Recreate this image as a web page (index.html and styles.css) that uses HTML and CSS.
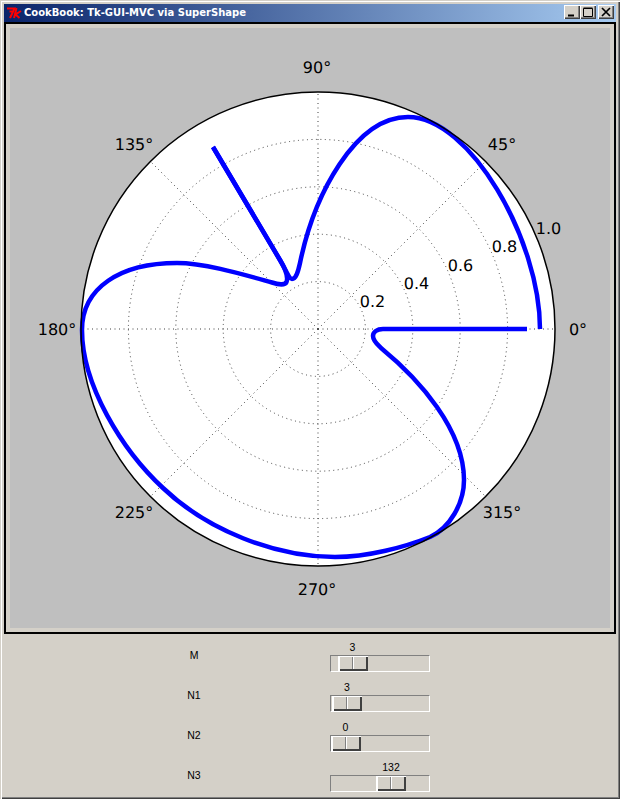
FILE: index.html
```html
<!DOCTYPE html>
<html lang="en">
<head>
<meta charset="utf-8">
<title>CookBook: Tk-GUI-MVC via SuperShape</title>
<link rel="stylesheet" href="styles.css">
</head>
<body>
<div class="window">
  <header class="titlebar">
    <svg class="tk-icon" viewBox="0 0 16 12" width="16" height="12" aria-hidden="true">
      <path class="tk-seven" d="M1 1.5H8.5L4 11"/>
      <path class="tk-seven" d="M3.5 4.5H6.5"/>
      <path class="tk-k" d="M10.5 1L8 11M15 4L9.5 7.5L13.5 11"/>
    </svg>
    <span class="title-text">CookBook: Tk-GUI-MVC via SuperShape</span>
    <div class="title-buttons">
      <span class="wbtn"><svg viewBox="0 0 12 10" width="12" height="10"><path class="glyph" d="M2 8.5H8" stroke-width="2"/></svg></span>
      <span class="wbtn"><svg viewBox="0 0 12 10" width="12" height="10"><path class="glyph" d="M1.5 1.5H10.5V9.5H1.5ZM1.5 1H10.5" stroke-width="1"/></svg></span>
      <span class="wbtn wbtn-close"><svg viewBox="0 0 12 10" width="12" height="10"><path class="glyph" d="M2 1L10 9M10 1L2 9" stroke-width="1.7"/></svg></span>
    </div>
  </header>

  <section class="canvas-frame">
    <svg class="plot" viewBox="10 28 600 600" width="600" height="600">
      <circle class="disc" cx="318" cy="329" r="237"/>
      <g class="grid-lines">
        <circle cx="318" cy="329" r="47.4"/>
        <circle cx="318" cy="329" r="94.8"/>
        <circle cx="318" cy="329" r="142.2"/>
        <circle cx="318" cy="329" r="189.6"/>
        <path d="M318 329H555M318 329L485.6 161.4M318 329V92M318 329L150.4 161.4M318 329H81M318 329L150.4 496.6M318 329V566M318 329L485.6 496.6"/>
      </g>
      <path class="curve" d="M540,329 C540,240 470,117 408,117 C355,117 314,195 300,263 C298,272 296,279 292,279 C289,279 286,270 280,260 L213,147"/>
      <path class="curve" d="M527,329 L383,329 C377,329 373,332 373,336 C373,341 378,345 381,348 C420,380 464,430 464,480 C464,503 450,528 430,537 C405,547 368,557 335,557 C275,557 207,530 163,488 C122,450 82,385 82,330 C82,288 120,263 177,263 C205,263 245,275 272,282.5 C278,284.5 285,285.5 286.5,282 C288,278 286,270 280,260 L213,147"/>
      <circle class="disc-edge" cx="318" cy="329" r="237"/>
      <g class="tick-labels">
        <text x="578" y="329">0°</text>
        <text x="502" y="144">45°</text>
        <text x="317" y="67">90°</text>
        <text x="134" y="144">135°</text>
        <text x="57" y="329">180°</text>
        <text x="134" y="512">225°</text>
        <text x="317" y="589">270°</text>
        <text x="502" y="512">315°</text>
        <text x="372.5" y="301">0.2</text>
        <text x="416.5" y="283">0.4</text>
        <text x="460.5" y="265">0.6</text>
        <text x="504.5" y="246">0.8</text>
        <text x="548.5" y="228">1.0</text>
      </g>
    </svg>
  </section>

  <section class="controls">
    <div class="ctl-label">M</div>
    <div class="scale">
      <span class="scale-value" style="left:22.5px">3</span>
      <div class="trough"><div class="thumb" style="left:7px"></div></div>
    </div>
    <div class="ctl-label">N1</div>
    <div class="scale">
      <span class="scale-value" style="left:17px">3</span>
      <div class="trough"><div class="thumb" style="left:1px"></div></div>
    </div>
    <div class="ctl-label">N2</div>
    <div class="scale">
      <span class="scale-value" style="left:15.5px">0</span>
      <div class="trough"><div class="thumb" style="left:0"></div></div>
    </div>
    <div class="ctl-label">N3</div>
    <div class="scale">
      <span class="scale-value" style="left:61px">132</span>
      <div class="trough"><div class="thumb" style="left:45px"></div></div>
    </div>
  </section>
</div>
</body>
</html>
```
FILE: styles.css
```css
* { box-sizing: border-box; }
html, body { margin: 0; padding: 0; background: #d4d0c8; }
.window {
  width: 620px;
  height: 799px;
  padding: 4px 4px 0;
  overflow: hidden;
  background: #d4d0c8;
  box-shadow: inset 1px 1px 0 #d4d0c8, inset 2px 2px 0 #fff, inset -1px -1px 0 #404040, inset -2px -2px 0 #808080;
}
.titlebar {
  height: 18px;
  display: flex;
  align-items: center;
  padding: 0 2px 0 2px;
  background: linear-gradient(90deg, #0a246a, #a6caf0);
}
.tk-icon { flex: none; margin-right: 2px; }
.tk-seven, .tk-k { fill: none; stroke: #f00; stroke-width: 2; }
.title-text {
  flex: 1;
  font: bold 10px/18px "DejaVu Sans", sans-serif;
  color: #fff;
  white-space: nowrap;
}
.title-buttons { display: flex; margin-bottom: 2px; }
.wbtn {
  width: 16px;
  height: 14px;
  display: flex;
  align-items: center;
  justify-content: center;
  background: #d4d0c8;
  box-shadow: inset 1px 1px 0 #fff, inset -1px -1px 0 #404040, inset -2px -2px 0 #808080;
}
.wbtn-close { margin-left: 2px; }
.glyph { fill: none; stroke: #000; }
.canvas-frame {
  width: 612px;
  height: 612px;
  border: 2px solid #000;
  padding: 4px;
  background: #d4d0c8;
}
.plot { display: block; background: #bfbfbf; }
.disc { fill: #fff; }
.disc-edge { fill: none; stroke: #000; stroke-width: 1.5; }
.grid-lines { fill: none; stroke: #000; stroke-width: 1; stroke-dasharray: 1 3.5; opacity: 0.75; }
.curve { fill: none; stroke: #00f; stroke-width: 4.5; stroke-linejoin: round; }
.tick-labels text {
  font: 16px "DejaVu Sans", sans-serif;
  fill: #000;
  text-anchor: middle;
  dominant-baseline: central;
  text-rendering: geometricPrecision;
}
.controls {
  margin-top: 6px;
  display: grid;
  grid-template-columns: 326px 100px;
  grid-auto-rows: 40px;
}
.ctl-label {
  width: 52px;
  margin-left: 164px;
  margin-top: 15px;
  font: 10.5px/1 "Liberation Sans", sans-serif;
  color: #000;
  text-align: center;
  line-height: 0;
}
.scale { position: relative; padding-top: 15px; }
.scale-value {
  position: absolute;
  top: 0;
  transform: translateX(-50%);
  font: 10.5px/14px "Liberation Sans", sans-serif;
  color: #000;
}
.trough {
  position: relative;
  width: 100px;
  height: 17px;
  border-style: solid;
  border-width: 1px;
  border-color: #808080 #fff #fff #808080;
}
.thumb {
  position: absolute;
  top: 0;
  width: 30px;
  height: 15px;
  background: linear-gradient(90deg, transparent 14px, #808080 14px, #808080 15px, #fff 15px, #fff 16px, transparent 16px) #d4d0c8;
  box-shadow: inset 1px 1px 0 #fff, inset 2px 0 0 #fff, inset -1px -1px 0 #404040, inset -2px -2px 0 #404040;
}
```
